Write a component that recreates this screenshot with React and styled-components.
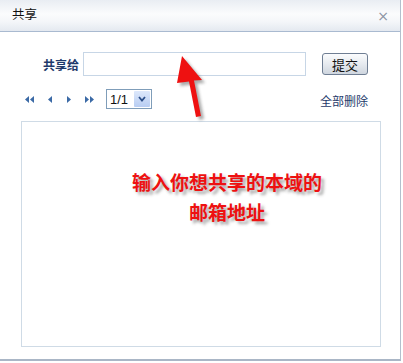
import React from "react";
import styled, { createGlobalStyle } from "styled-components";

const Global = createGlobalStyle`
  html, body { margin: 0; padding: 0; background: #fff; }
  body { font-family: "Noto Sans CJK SC", "Noto Sans", sans-serif; font-size: 12px; color: #222; }
`;

const Dialog = styled.div`
  position: relative;
  width: 400px;
  height: 359px;
  border-right: 1px solid #b4bfcd;
  border-bottom: 2px solid #aab6c6;
  background: #fff;
  display: flex;
  flex-direction: column;
`;

const Header = styled.div`
  height: 31px;
  border-bottom: 1px solid #a9bad0;
  background: linear-gradient(#e9edf3, #fbfcfd 45%, #f4f6f9 70%, #e4e9f0);
  display: flex;
  align-items: center;
  justify-content: space-between;
  padding: 0 11px 0 12px;
`;

const Title = styled.span`
  font-size: 12.5px;
  color: #111;
  line-height: 1;
  margin-top: -2px;
`;

const Close = styled.span`
  font-family: "DejaVu Sans", sans-serif;
  font-size: 14px;
  color: #8a94a3;
  line-height: 1;
`;

const Body = styled.div`
  padding: 20px 20px 0 21px;
  display: flex;
  flex-direction: column;
`;

const ShareRow = styled.div`
  display: flex;
  align-items: center;
  height: 24px;
  padding-left: 22px;
`;

const Label = styled.span`
  font-weight: bold;
  color: #1e3a6b;
  font-size: 12px;
  width: 40px;
`;

const Input = styled.div`
  width: 221px;
  height: 22px;
  border: 1px solid #c7d6e6;
  background: #fff;
`;

const SubmitBtn = styled.button`
  margin-left: 16px;
  width: 46px;
  height: 22px;
  border: 1px solid #6f7e93;
  border-radius: 3px;
  background: linear-gradient(#fbfcfd, #e6eaef 50%, #cfd6df);
  font-family: "Noto Sans CJK SC", sans-serif;
  font-size: 13px;
  color: #111;
  padding: 0;
  line-height: 1;
`;

const PagerRow = styled.div`
  display: flex;
  align-items: center;
  height: 20px;
  margin-top: 13px;
  padding-left: 4px;
`;

const PageIcon = styled.svg`
  display: block;
  margin-right: ${(p) => p.$gap}px;
`;

const Select = styled.div`
  display: flex;
  align-items: stretch;
  width: 44px;
  height: 18px;
  border: 1px solid #7f9db9;
  background: #fff;
`;

const SelectText = styled.span`
  flex: 1;
  font-family: "Liberation Sans", Arial, sans-serif;
  font-size: 13px;
  color: #111;
  display: flex;
  align-items: center;
  padding-left: 3px;
`;

const SelectBtn = styled.span`
  width: 16px;
  margin: 1px;
  background: linear-gradient(#dde8fb, #b8cdf2);
  border-radius: 1px;
  display: flex;
  align-items: center;
  justify-content: center;
`;

const DeleteAll = styled.a`
  margin-left: auto;
  margin-right: 12px;
  color: #1e3a6b;
  font-size: 12px;
  text-decoration: none;
  margin-top: 2px;
`;

const ListBox = styled.div`
  margin-top: 12px;
  width: 358px;
  height: 224px;
  border: 1px solid #cfdbe6;
`;

const Note = styled.div`
  position: absolute;
  left: 112px;
  top: 167px;
  width: 230px;
  text-align: center;
  color: #ee1111;
  font-weight: bold;
  font-size: 19px;
  line-height: 30px;
  text-shadow: 3px 3px 3px rgba(60, 60, 60, 0.45);
`;

const Arrow = styled.svg`
  position: absolute;
  left: 168px;
  top: 52px;
  overflow: visible;
`;

export default function App() {
  const blue = "#3b6aa6";
  return (
    <>
      <Global />
      <Dialog>
        <Header>
          <Title>共享</Title>
          <Close>×</Close>
        </Header>
        <Body>
          <ShareRow>
            <Label>共享给</Label>
            <Input />
            <SubmitBtn>提交</SubmitBtn>
          </ShareRow>
          <PagerRow>
            <PageIcon width="9" height="7" viewBox="0 0 9 7" $gap={14}>
              <path d="M4 0 L0 3.5 L4 7 Z M9 0 L5 3.5 L9 7 Z" fill={blue} />
            </PageIcon>
            <PageIcon width="4" height="7" viewBox="0 0 4 7" $gap={15}>
              <path d="M4 0 L0 3.5 L4 7 Z" fill={blue} />
            </PageIcon>
            <PageIcon width="4" height="7" viewBox="0 0 4 7" $gap={14}>
              <path d="M0 0 L4 3.5 L0 7 Z" fill={blue} />
            </PageIcon>
            <PageIcon width="9" height="7" viewBox="0 0 9 7" $gap={12}>
              <path d="M0 0 L4 3.5 L0 7 Z M5 0 L9 3.5 L5 7 Z" fill={blue} />
            </PageIcon>
            <Select>
              <SelectText>1/1</SelectText>
              <SelectBtn>
                <svg width="8" height="6" viewBox="0 0 8 6">
                  <path d="M1 1 L4 4.5 L7 1" stroke="#2c4f8a" strokeWidth="1.8" fill="none" />
                </svg>
              </SelectBtn>
            </Select>
            <DeleteAll>全部删除</DeleteAll>
          </PagerRow>
          <ListBox />
        </Body>
        <Note>
          输入你想共享的本域的
          <br />
          邮箱地址
        </Note>
        <Arrow width="40" height="70" viewBox="0 0 40 70">
          <defs>
            <filter id="sh" x="-50%" y="-50%" width="200%" height="200%">
              <feGaussianBlur stdDeviation="1.5" />
            </filter>
          </defs>
          <g transform="translate(3,3)" opacity="0.45" filter="url(#sh)">
            <path d="M14 4 L34 28 L26 28.5 L33 64 L28 65 L21 29.5 L9 31 Z" fill="#444" />
          </g>
          <path d="M14 4 L34 28 L26 28.5 L33 64 L28 65 L21 29.5 L9 31 Z" fill="#ee1111" />
        </Arrow>
      </Dialog>
    </>
  );
}
